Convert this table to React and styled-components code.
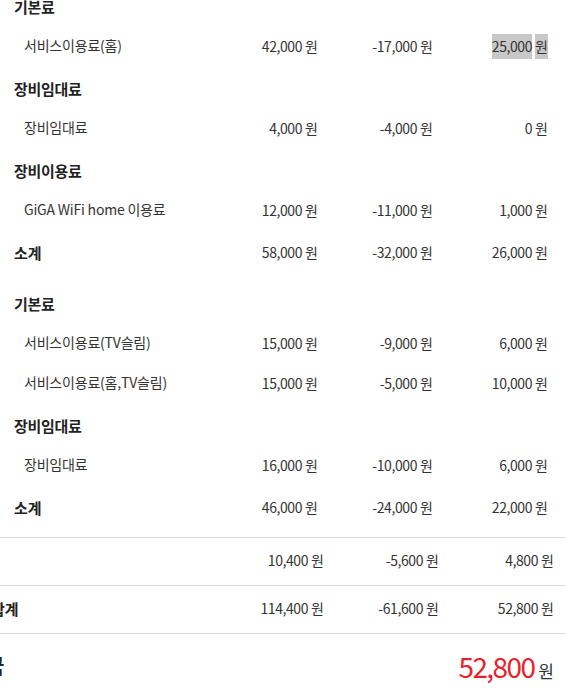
import React from "react";
import styled, { createGlobalStyle } from "styled-components";

const Global = createGlobalStyle`
  html, body { margin: 0; padding: 0; background: #fff; }
  body {
    width: 566px;
    height: 696px;
    overflow: hidden;
    font-family: "Noto Sans CJK KR", "Noto Sans", sans-serif;
    color: #333;
  }
`;

const Wrapper = styled.div`
  margin-top: -14px;
  margin-left: -12px;
  width: 603px;
`;

const Upper = styled.div`
  padding: 0 43px 8px 26px;
  border-bottom: 1px solid #ddd;
`;

const Section = styled.div`
  & + & { margin-top: 9px; }
`;

const Group = styled.div`
  & + & { margin-top: 2px; }
`;

const GroupTitle = styled.div`
  height: 40px;
  display: flex;
  align-items: center;
  font-size: 15px;
  font-weight: 700;
  color: #222;
  letter-spacing: -0.3px;
`;

const Row = styled.div`
  display: grid;
  grid-template-columns: 1fr 115px 115px 115px;
  align-items: center;
  height: ${(p) => p.$h || 40}px;
`;

const ItemLabel = styled.div`
  padding-left: 10px;
  font-size: 14px;
  color: #333;
  letter-spacing: -0.2px;
  margin-top: -2px;
`;

const SubLabel = styled.div`
  font-size: 15px;
  font-weight: 700;
  color: #222;
`;

const Cell = styled.div`
  text-align: right;
  font-size: 14px;
  color: #333;
  letter-spacing: -0.4px;
  white-space: nowrap;
`;

const Hl = styled.span`
  background: ${(p) => (p.$on ? "#c8c8c8" : "transparent")};
  padding: 2px 0 3px;
`;

const Unit = styled(Hl)`
  margin-left: 3px;
  letter-spacing: 0;
`;

const Lower = styled.div``;

const LowerRow = styled.div`
  display: grid;
  grid-template-columns: 1fr 115px 115px 115px;
  align-items: center;
  height: 47px;
  padding-right: 37px;
  border-bottom: 1px solid #ddd;
  & > div { margin-top: -3px; }
`;

const TotalLabel = styled.div`
  padding-left: 3px;
  font-size: 15px;
  font-weight: 700;
  color: #222;
  white-space: nowrap;
`;

const Final = styled.div`
  display: flex;
  justify-content: space-between;
  align-items: center;
  height: 63px;
  padding-right: 37px;
`;

const FinalLabel = styled.div`
  font-size: 20px;
  font-weight: 700;
  color: #222;
  margin-left: -2px;
`;

const FinalAmount = styled.div`
  display: flex;
  align-items: baseline;
  gap: 4px;
`;

const Big = styled.span`
  font-size: 28px;
  color: #e8222c;
  letter-spacing: -1.6px;
`;

const BigUnit = styled.span`
  font-size: 17px;
  color: #333;
`;

const Amount = ({ v, hl }) => (
  <Cell>
    <Hl $on={hl}>{v}</Hl>
    <Unit $on={hl}>원</Unit>
  </Cell>
);

const sections = [
  {
    groups: [
      { title: "기본료", items: [["서비스이용료(홈)", "42,000", "-17,000", "25,000", true]] },
      { title: "장비임대료", items: [["장비임대료", "4,000", "-4,000", "0"]] },
      { title: "장비이용료", items: [["GiGA WiFi home 이용료", "12,000", "-11,000", "1,000"]] },
    ],
    sub: ["58,000", "-32,000", "26,000"],
  },
  {
    groups: [
      {
        title: "기본료",
        items: [
          ["서비스이용료(TV슬림)", "15,000", "-9,000", "6,000"],
          ["서비스이용료(홈,TV슬림)", "15,000", "-5,000", "10,000"],
        ],
      },
      { title: "장비임대료", items: [["장비임대료", "16,000", "-10,000", "6,000"]] },
    ],
    sub: ["46,000", "-24,000", "22,000"],
  },
];

export default function App() {
  return (
    <>
      <Global />
      <Wrapper>
        <Upper>
          {sections.map((s, si) => (
            <Section key={si}>
              {s.groups.map((g, gi) => (
                <Group key={gi}>
                  <GroupTitle>{g.title}</GroupTitle>
                  {g.items.map((it, ii) => (
                    <Row key={ii}>
                      <ItemLabel>{it[0]}</ItemLabel>
                      <Amount v={it[1]} />
                      <Amount v={it[2]} />
                      <Amount v={it[3]} hl={it[4]} />
                    </Row>
                  ))}
                </Group>
              ))}
              <Row $h={44}>
                <SubLabel>소계</SubLabel>
                <Amount v={s.sub[0]} />
                <Amount v={s.sub[1]} />
                <Amount v={s.sub[2]} />
              </Row>
            </Section>
          ))}
        </Upper>
        <Lower>
          <LowerRow>
            <TotalLabel></TotalLabel>
            <Amount v="10,400" />
            <Amount v="-5,600" />
            <Amount v="4,800" />
          </LowerRow>
          <LowerRow>
            <TotalLabel>합계</TotalLabel>
            <Amount v="114,400" />
            <Amount v="-61,600" />
            <Amount v="52,800" />
          </LowerRow>
          <Final>
            <FinalLabel>금</FinalLabel>
            <FinalAmount>
              <Big>52,800</Big>
              <BigUnit>원</BigUnit>
            </FinalAmount>
          </Final>
        </Lower>
      </Wrapper>
    </>
  );
}
